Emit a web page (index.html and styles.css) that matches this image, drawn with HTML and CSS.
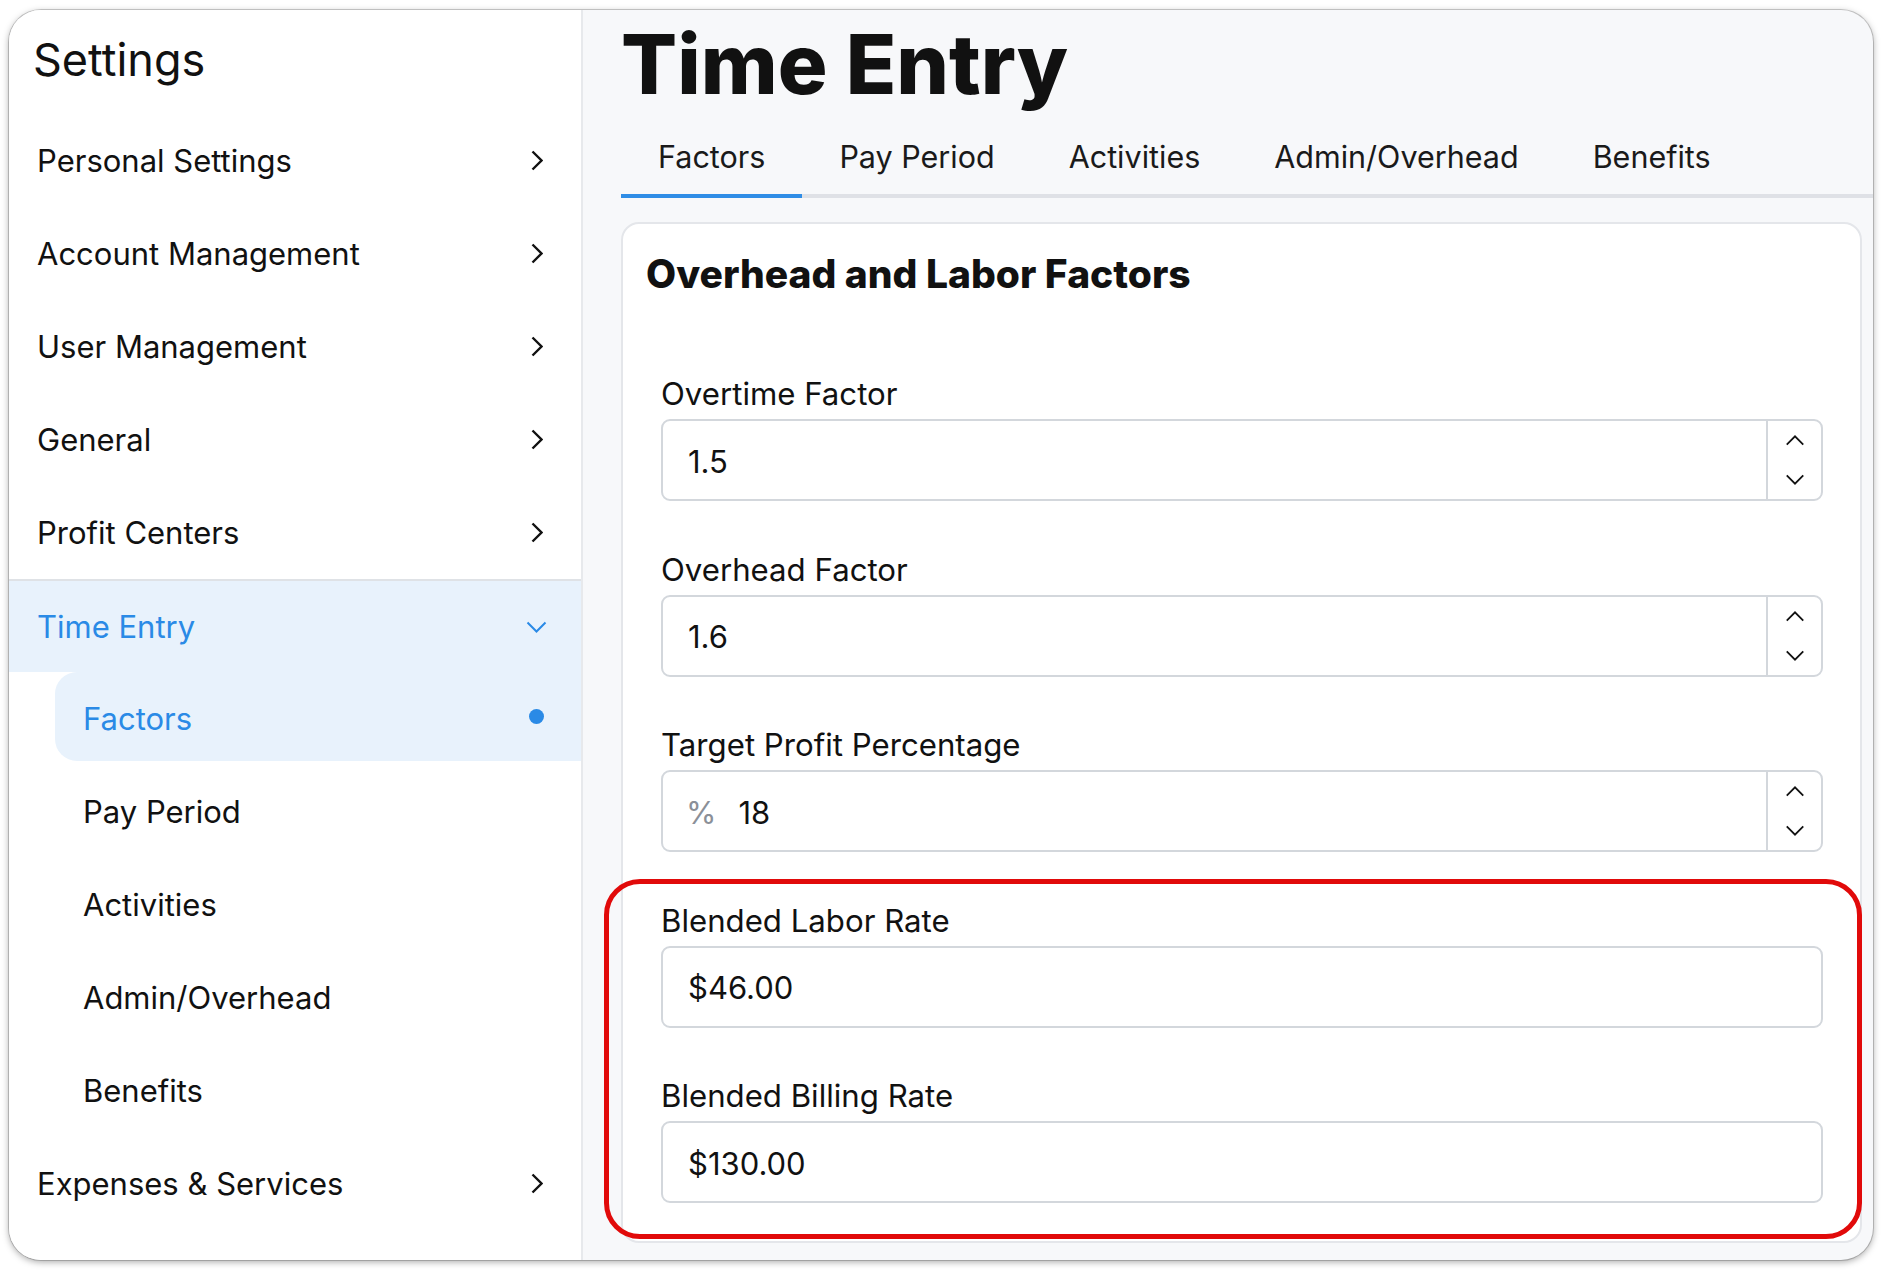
FILE: index.html
```html
<!DOCTYPE html>
<html lang="en">
<head>
  <meta charset="UTF-8" />
  <title>Settings - Time Entry</title>
  <meta name="viewport" content="width=device-width, initial-scale=1.0"/>
  <link rel="stylesheet" href="styles.css">
</head>
<body>

  <div class="window">

    <aside class="sidebar">
      <h1 class="sidebar-title">Settings</h1>
      <nav class="menu">
        <a class="menu-item">Personal Settings
          <svg class="chev" viewBox="0 0 12 21"><path d="M1.5 1.5 L10.5 10.5 L1.5 19.5"/></svg>
        </a>
        <a class="menu-item">Account Management
          <svg class="chev" viewBox="0 0 12 21"><path d="M1.5 1.5 L10.5 10.5 L1.5 19.5"/></svg>
        </a>
        <a class="menu-item">User Management
          <svg class="chev" viewBox="0 0 12 21"><path d="M1.5 1.5 L10.5 10.5 L1.5 19.5"/></svg>
        </a>
        <a class="menu-item">General
          <svg class="chev" viewBox="0 0 12 21"><path d="M1.5 1.5 L10.5 10.5 L1.5 19.5"/></svg>
        </a>
        <a class="menu-item">Profit Centers
          <svg class="chev" viewBox="0 0 12 21"><path d="M1.5 1.5 L10.5 10.5 L1.5 19.5"/></svg>
        </a>

        <div class="menu-group">
          <a class="menu-item open">Time Entry
            <svg class="chev-down" viewBox="0 0 21 12"><path d="M1.5 1.5 L10.5 10.5 L19.5 1.5"/></svg>
          </a>
          <a class="sub-item current">Factors <span class="dot"></span></a>
          <a class="sub-item">Pay Period</a>
          <a class="sub-item">Activities</a>
          <a class="sub-item">Admin/Overhead</a>
          <a class="sub-item">Benefits</a>
        </div>

        <a class="menu-item">Expenses &amp; Services
          <svg class="chev" viewBox="0 0 12 21"><path d="M1.5 1.5 L10.5 10.5 L1.5 19.5"/></svg>
        </a>
      </nav>
    </aside>

    <main class="content">
      <h2 class="page-title">Time Entry</h2>

      <div class="tabs">
        <a class="tab active">Factors</a>
        <a class="tab">Pay Period</a>
        <a class="tab">Activities</a>
        <a class="tab">Admin/Overhead</a>
        <a class="tab">Benefits</a>
      </div>

      <section class="card">
        <h3 class="card-title">Overhead and Labor Factors</h3>

        <div class="fields">
          <div class="field">
            <label class="field-label">Overtime Factor</label>
            <div class="input-box">
              <input class="input" type="text" value="1.5" readonly />
              <div class="spin">
                <svg viewBox="0 0 21 12"><path d="M1.5 10.5 L10.5 1.5 L19.5 10.5"/></svg>
                <svg viewBox="0 0 21 12"><path d="M1.5 1.5 L10.5 10.5 L19.5 1.5"/></svg>
              </div>
            </div>
          </div>

          <div class="field">
            <label class="field-label">Overhead Factor</label>
            <div class="input-box">
              <input class="input" type="text" value="1.6" readonly />
              <div class="spin">
                <svg viewBox="0 0 21 12"><path d="M1.5 10.5 L10.5 1.5 L19.5 10.5"/></svg>
                <svg viewBox="0 0 21 12"><path d="M1.5 1.5 L10.5 10.5 L19.5 1.5"/></svg>
              </div>
            </div>
          </div>

          <div class="field">
            <label class="field-label">Target Profit Percentage</label>
            <div class="input-box">
              <span class="prefix">%</span>
              <input class="input with-prefix" type="text" value="18" readonly />
              <div class="spin">
                <svg viewBox="0 0 21 12"><path d="M1.5 10.5 L10.5 1.5 L19.5 10.5"/></svg>
                <svg viewBox="0 0 21 12"><path d="M1.5 1.5 L10.5 10.5 L19.5 1.5"/></svg>
              </div>
            </div>
          </div>

          <div class="field">
            <label class="field-label">Blended Labor Rate</label>
            <div class="input-box">
              <input class="input" type="text" value="$46.00" readonly />
            </div>
          </div>

          <div class="field">
            <label class="field-label">Blended Billing Rate</label>
            <div class="input-box">
              <input class="input" type="text" value="$130.00" readonly />
            </div>
          </div>
        </div>

        <div class="callout"></div>
      </section>
    </main>

  </div>

</body>
</html>
```

FILE: styles.css
```css
* {
  box-sizing: border-box;
}

body {
  margin: 0;
  padding: 10px 11px 10px 9px;
  height: 1270px;
  background: #fff;
  color: #111;
  font-family: Inter, "Noto Sans", sans-serif;
}

a {
  color: inherit;
  text-decoration: none;
}

.window {
  display: grid;
  grid-template-columns: 574px 1fr;
  height: 1250px;
  border-radius: 32px;
  overflow: hidden;
  background: #f7f8fa;
  box-shadow: 0 0 0 1px rgba(0,0,0,0.18), 0 2px 7px rgba(0,0,0,0.35);
}

/* sidebar */

.sidebar {
  background: #fff;
  border-right: 2px solid #e7e9ec;
}

.sidebar-title {
  margin: 0;
  padding: 23px 0 27px 24px;
  font-size: 45px;
  line-height: 54px;
  font-weight: 400;
}

.menu-item {
  display: flex;
  align-items: center;
  justify-content: space-between;
  height: 93px;
  padding: 0 38px 0 28px;
  font-size: 31px;
}

.chev {
  width: 12px;
  height: 21px;
  fill: none;
  stroke: #111;
  stroke-width: 2.4;
}

.menu-item.open {
  border-top: 2px solid #dfe2e6;
  background: #e8f2fc;
  color: #2a8ae6;
}

.chev-down {
  width: 21px;
  height: 12px;
  margin-right: -4px;
  fill: none;
  stroke: #2a8ae6;
  stroke-width: 2;
}

.sub-item {
  display: flex;
  align-items: center;
  justify-content: space-between;
  height: 93px;
  margin-left: 46px;
  padding: 0 37px 0 28px;
  font-size: 31px;
}

.sub-item.current {
  height: 89px;
  margin-bottom: 4px;
  padding-top: 4px;
  border-radius: 22px 0 0 22px;
  background: #e8f2fc;
  color: #2a8ae6;
}

.dot {
  width: 15px;
  height: 15px;
  margin-top: -4px;
  border-radius: 50%;
  background: #2a8ae6;
}

/* main */

.content {
  padding: 12px 0 0 38px;
}

.page-title {
  margin: 0;
  font-size: 83px;
  line-height: 84px;
  font-weight: 800;
}

.tabs {
  display: flex;
  border-bottom: 4px solid #dfe1e6;
}

.tab {
  padding: 33px 37px 19px;
  margin-bottom: -4px;
  border-bottom: 4px solid transparent;
  font-size: 30.5px;
  line-height: 36px;
  color: #1a1a1a;
}

.tab.active {
  border-bottom-color: #2f8de6;
}

.card {
  position: relative;
  margin: 24px 11px 0 0;
  padding: 27px 37px 38px 38px;
  background: #fff;
  border: 2px solid #e4e6ea;
  border-radius: 18px;
}

.card-title {
  margin: 0 0 0 -15px;
  font-size: 39px;
  line-height: 46px;
  font-weight: 800;
}

.fields {
  display: flex;
  flex-direction: column;
  gap: 48.5px;
  margin-top: 77px;
}

.field-label {
  display: block;
  margin-bottom: 5px;
  font-size: 31.2px;
  line-height: 40px;
}

.input-box {
  display: flex;
  align-items: center;
  height: 82px;
  border: 2px solid #d3d7dc;
  border-radius: 9px;
  background: #fff;
}

.input {
  flex: 1;
  min-width: 0;
  height: 100%;
  padding: 2px 0 0 25px;
  border: 0;
  outline: none;
  background: transparent;
  font-family: Inter, "Noto Sans", sans-serif;
  font-size: 31px;
  color: #111;
}

.input.with-prefix {
  padding-left: 22px;
}

.prefix {
  padding: 2px 0 0 23px;
  font-size: 31px;
  color: #8b9098;
}

.spin {
  display: flex;
  flex-direction: column;
  justify-content: space-between;
  align-items: center;
  width: 55px;
  height: 100%;
  padding: 14px 0 14px;
  border-left: 2px solid #d3d7dc;
}

.spin svg {
  width: 20px;
  height: 11px;
  fill: none;
  stroke: #111;
  stroke-width: 2;
}

.callout {
  position: absolute;
  top: 655px;
  left: -19px;
  right: -2px;
  bottom: 2px;
  border: 5px solid #e10a0a;
  border-radius: 36px;
  pointer-events: none;
}
```
